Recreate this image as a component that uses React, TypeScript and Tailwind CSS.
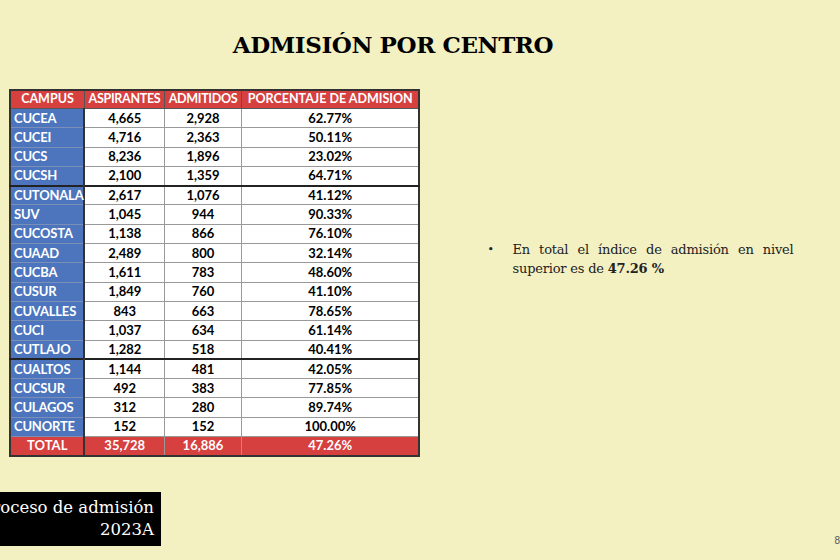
const rows: [string, string, string, string][] = [
  ["CUCEA", "4,665", "2,928", "62.77%"],
  ["CUCEI", "4,716", "2,363", "50.11%"],
  ["CUCS", "8,236", "1,896", "23.02%"],
  ["CUCSH", "2,100", "1,359", "64.71%"],
  ["CUTONALA", "2,617", "1,076", "41.12%"],
  ["SUV", "1,045", "944", "90.33%"],
  ["CUCOSTA", "1,138", "866", "76.10%"],
  ["CUAAD", "2,489", "800", "32.14%"],
  ["CUCBA", "1,611", "783", "48.60%"],
  ["CUSUR", "1,849", "760", "41.10%"],
  ["CUVALLES", "843", "663", "78.65%"],
  ["CUCI", "1,037", "634", "61.14%"],
  ["CUTLAJO", "1,282", "518", "40.41%"],
  ["CUALTOS", "1,144", "481", "42.05%"],
  ["CUCSUR", "492", "383", "77.85%"],
  ["CULAGOS", "312", "280", "89.74%"],
  ["CUNORTE", "152", "152", "100.00%"],
];

// filas con linea gruesa arriba
const thick = ["CUTONALA", "CUALTOS"];

export default function App() {
  return (
    <div className="w-[840px] h-[560px] bg-[#f3f0c2] flex flex-col overflow-hidden relative">
      <h1 className="text-center pt-[28px] ml-[-54px] text-[23px] font-bold text-black font-['DejaVu_Serif',serif] tracking-[-0.4px]">
        ADMISIÓN POR CENTRO
      </h1>

      <div className="flex mt-[26px]">
        <table className="ml-[9px] border-collapse border-2 border-[#333] font-['Lato',sans-serif] font-bold text-[13px] leading-none">
          <thead>
            <tr className="h-[19px] bg-[#d6403f] text-white text-[12.5px]">
              <th className="w-[74px] border border-[#555] font-bold">CAMPUS</th>
              <th className="w-[80px] border border-[#555] font-bold tracking-[-0.3px]">ASPIRANTES</th>
              <th className="w-[77px] border border-[#555] font-bold tracking-[-0.3px]">ADMITIDOS</th>
              <th className="w-[178px] border border-[#555] font-bold">PORCENTAJE DE ADMISION</th>
            </tr>
          </thead>
          <tbody>
            {rows.map((r) => {
              const t = thick.includes(r[0]);
              return (
                <tr
                  key={r[0]}
                  className={t ? "h-[19.3px] border-t-2 border-[#222]" : "h-[19.3px]"}
                >
                  <td className="bg-[#4c75bd] text-white pl-[3px] border-r-2 border-[#333] border-b border-b-[#7a8fb8] tracking-[-0.2px]">
                    {r[0]}
                  </td>
                  <td className="bg-white text-center border border-[#999]">{r[1]}</td>
                  <td className="bg-white text-center border border-[#999]">{r[2]}</td>
                  <td className="bg-white text-center border border-[#999]">{r[3]}</td>
                </tr>
              );
            })}
            <tr className="h-[19.3px] bg-[#d6403f] text-white">
              <td className="text-center border-r-2 border-[#333]">TOTAL</td>
              <td className="text-center border border-[#999]">35,728</td>
              <td className="text-center border border-[#999]">16,886</td>
              <td className="text-center border border-[#999]">47.26%</td>
            </tr>
          </tbody>
        </table>

        <div className="ml-[67px] mt-[151px] w-[306px] flex font-['DejaVu_Serif',serif] text-[13px] leading-[19px] text-[#222]">
          <span className="w-[25px] text-[11px]">•</span>
          <p className="flex-1 text-justify tracking-[-0.2px]">
            En total el índice de admisión en nivel superior es de <b>47.26 %</b>
          </p>
        </div>
      </div>

      <div className="mt-[35px] w-[161px] h-[54px] bg-black text-white font-['DejaVu_Serif',serif] text-[16.5px] leading-[22px] flex flex-col items-end justify-center pr-[7px] overflow-hidden whitespace-nowrap">
        <span>Proceso de admisión</span>
        <span>2023A</span>
      </div>

      <span className="absolute right-[0px] bottom-[12px] text-[10px] text-[#555] font-['Liberation_Sans',sans-serif]">
        8
      </span>
    </div>
  );
}
